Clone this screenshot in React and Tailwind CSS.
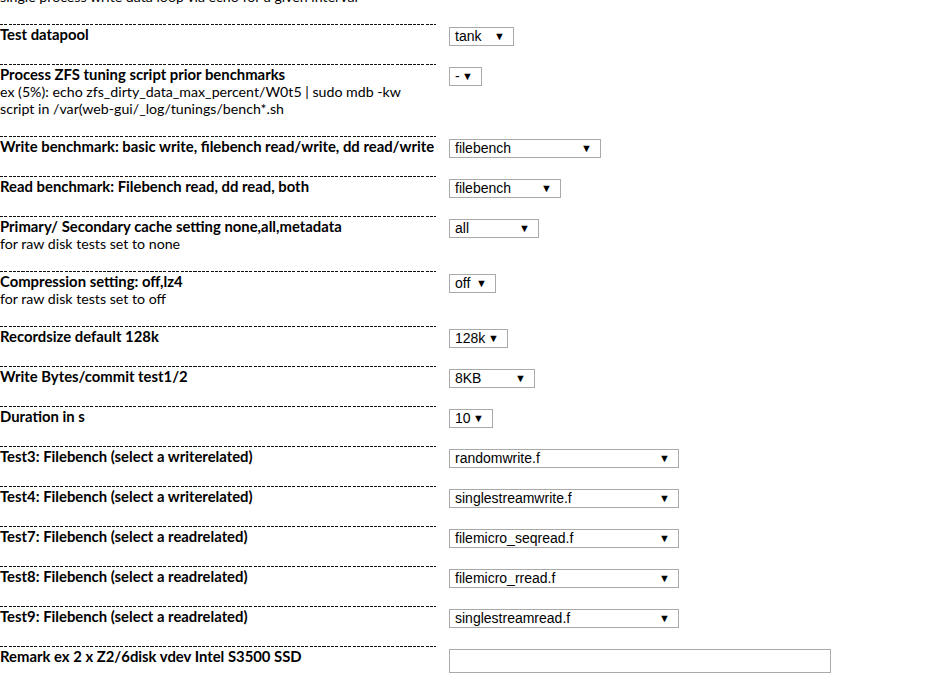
import React from "react";

const rows = [
  { label: "Test datapool", select: { value: "tank", w: "w-[65px]" } },
  {
    label: "Process ZFS tuning script prior benchmarks",
    notes: [
      "ex (5%): echo zfs_dirty_data_max_percent/W0t5 | sudo mdb -kw",
      "script in /var(web-gui/_log/tunings/bench*.sh",
    ],
    select: { value: "-", w: "w-[33px]" },
  },
  {
    label: "Write benchmark: basic write, filebench read/write, dd read/write",
    select: { value: "filebench", w: "w-[152px]" },
  },
  {
    label: "Read benchmark: Filebench read, dd read, both",
    select: { value: "filebench", w: "w-[112px]" },
  },
  {
    label: "Primary/ Secondary cache setting none,all,metadata",
    notes: ["for raw disk tests set to none"],
    select: { value: "all", w: "w-[90px]" },
  },
  {
    label: "Compression setting: off,lz4",
    notes: ["for raw disk tests set to off"],
    select: { value: "off", w: "w-[47px]" },
  },
  { label: "Recordsize default 128k", select: { value: "128k", w: "w-[59px]" } },
  { label: "Write Bytes/commit test1/2", select: { value: "8KB", w: "w-[86px]" } },
  { label: "Duration in s", select: { value: "10", w: "w-[44px]" } },
  {
    label: "Test3: Filebench (select a writerelated)",
    select: { value: "randomwrite.f", w: "w-[230px]" },
  },
  {
    label: "Test4: Filebench (select a writerelated)",
    select: { value: "singlestreamwrite.f", w: "w-[230px]" },
  },
  {
    label: "Test7: Filebench (select a readrelated)",
    select: { value: "filemicro_seqread.f", w: "w-[230px]" },
  },
  {
    label: "Test8: Filebench (select a readrelated)",
    select: { value: "filemicro_rread.f", w: "w-[230px]" },
  },
  {
    label: "Test9: Filebench (select a readrelated)",
    select: { value: "singlestreamread.f", w: "w-[230px]" },
  },
  { label: "Remark ex 2 x Z2/6disk vdev Intel S3500 SSD", input: true },
];

function FakeSelect({ value, w }) {
  return (
    <div
      className={`${w} h-[19px] border border-[#a9a9a9] bg-white flex items-center justify-between pl-[5px] pr-[8px] pb-[2px] text-[14px] leading-none text-black font-['Liberation_Sans',Arial,sans-serif]`}
    >
      <span className="whitespace-nowrap">{value}</span>
      <span className="text-[11px] leading-none pt-[2px]">▼</span>
    </div>
  );
}

function Row({ row }) {
  return (
    <div className="flex">
      <div className="w-[436px] shrink-0">
        <div className="h-px bg-[repeating-linear-gradient(90deg,#111_0_3px,transparent_3px_4.3px)]" />
        <div className="pt-[1px] pb-[19px] min-h-[39px]">
          <div className="font-bold text-[14.85px] whitespace-nowrap">{row.label}</div>
          {row.notes &&
            row.notes.map((n) => (
              <div key={n} className="whitespace-nowrap">
                {n}
              </div>
            ))}
        </div>
      </div>
      <div className="pl-[13px] pt-[3px]">
        {row.input ? (
          <div className="w-[382px] h-[24px] border border-[#a9a9a9] bg-white" />
        ) : (
          <FakeSelect {...row.select} />
        )}
      </div>
    </div>
  );
}

export default function App() {
  return (
    <div className="w-[932px] h-[686px] overflow-hidden bg-white text-black text-[14.2px] leading-[17px] font-['Lato','Noto_Sans',sans-serif]">
      <div className="-mt-[12px]">
        {/* tail of the previous row */}
        <div className="w-[436px] pb-[19px] whitespace-nowrap">
          single process write data loop via echo for a given interval
        </div>
        {rows.map((row) => (
          <Row key={row.label} row={row} />
        ))}
      </div>
    </div>
  );
}
